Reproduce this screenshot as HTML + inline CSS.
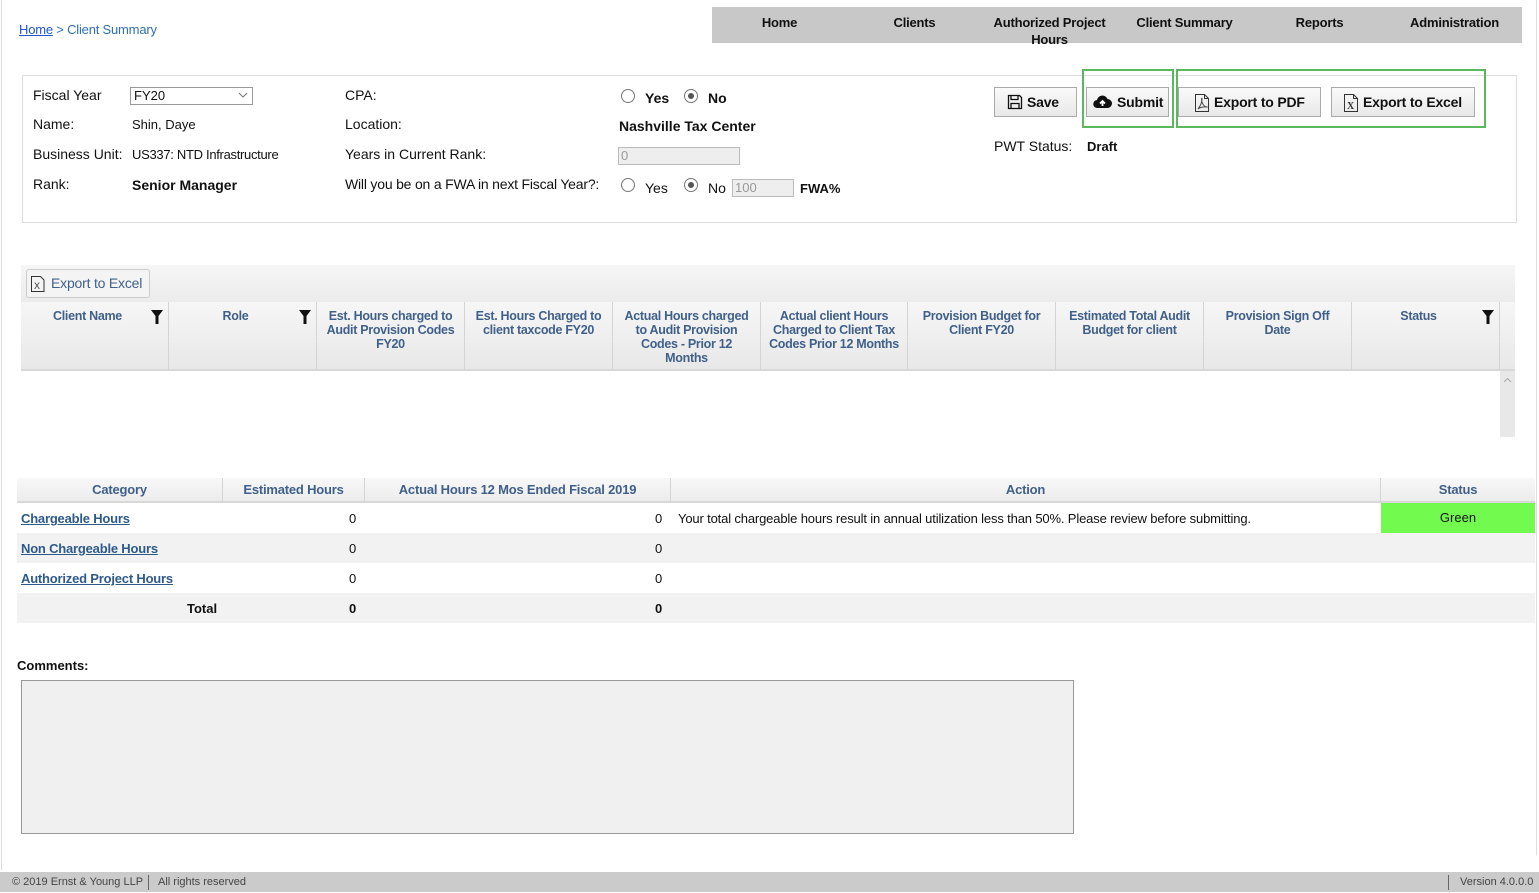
<!DOCTYPE html>
<html><head><meta charset="utf-8">
<style>
*{box-sizing:border-box;margin:0;padding:0}
body{width:1539px;height:892px;position:relative;background:#fff;font-family:"Liberation Sans",Arial,sans-serif;font-size:14px;color:#111;overflow:hidden}
.a{position:absolute;white-space:nowrap}
.b{font-weight:bold}
.nav{position:absolute;left:712px;top:7px;width:810px;height:36px;background:#c8c8c8}
.nav div{position:absolute;top:7px;width:135px;text-align:center;font-weight:bold;font-size:13px;line-height:17px;letter-spacing:-0.2px}
.radio{position:absolute;width:14px;height:14px;border:1px solid #777;border-radius:50%;background:#fff}
.radio.on::after{content:"";position:absolute;left:3px;top:3px;width:6px;height:6px;border-radius:50%;background:#555}
.inp{position:absolute;height:18px;border:1px solid #bbb;background:#eee;color:#999;font-size:13px;padding-left:2px;line-height:16px}
.btn{position:absolute;top:87px;height:30px;border:1px solid #aaa;background:linear-gradient(#fafafa,#e8e8e8);font-weight:bold;font-size:14px;line-height:28px;padding-left:32px;letter-spacing:-0.2px}
.btn svg{position:absolute;left:12px;top:6px}
.gh{position:absolute;top:302px;height:69px;background:linear-gradient(#f6f6f6,#e8e8e8);border-bottom:2px solid #d8d8d8;border-right:1px solid #d4d4d4;color:#40608a;font-weight:bold;font-size:12.5px;text-align:center;line-height:14px;padding:7px 1px 0;letter-spacing:-0.3px}
.gh svg{position:absolute;right:5px;top:8px}
.st{position:absolute;height:25px;top:478px;background:linear-gradient(#f8f8f8,#ececec);border-bottom:2px solid #d8d8d8;border-right:1px solid #d4d4d4;color:#40608a;font-weight:bold;font-size:13px;text-align:center;line-height:24px;letter-spacing:-0.2px}
.row{position:absolute;left:17px;width:1518px;height:30px}
.lk{position:absolute;left:4px;top:8px;color:#2e5a8a;font-weight:bold;font-size:13px;text-decoration:underline;letter-spacing:-0.2px}
.n{position:absolute;top:8px;font-size:13px}
</style></head><body>
<div class="a" style="left:1px;top:0;width:1px;height:870px;background:#ddd"></div>
<div class="a" style="left:1536px;top:0;width:1px;height:855px;background:#ddd"></div>

<div class="a" style="left:19px;top:22px;font-size:13px;color:#2f6fb0;letter-spacing:-0.2px"><span style="text-decoration:underline;color:#2255cc">Home</span> &gt; Client Summary</div>

<div class="nav">
<div style="left:0">Home</div><div style="left:135px">Clients</div><div style="left:270px">Authorized Project<br>Hours</div><div style="left:405px">Client Summary</div><div style="left:540px">Reports</div><div style="left:675px">Administration</div>
</div>

<div class="a" style="left:22px;top:75px;width:1495px;height:148px;border:1px solid #ddd"></div>
<div class="a" style="left:33px;top:87px">Fiscal Year</div>
<div class="a" style="left:130px;top:87px;width:123px;height:18px;border:1px solid #999;font-size:13px;padding-left:3px;line-height:16px">FY20<svg style="position:absolute;right:4px;top:4px" width="10" height="7" viewBox="0 0 10 7"><path d="M1 1l4 4 4-4" stroke="#777" fill="none"/></svg></div>
<div class="a" style="left:33px;top:116px">Name:</div>
<div class="a" style="left:132px;top:117px;font-size:13px">Shin, Daye</div>
<div class="a" style="left:33px;top:146px">Business Unit:</div>
<div class="a" style="left:132px;top:147px;font-size:13px;letter-spacing:-0.3px">US337: NTD Infrastructure</div>
<div class="a" style="left:33px;top:176px">Rank:</div>
<div class="a b" style="left:132px;top:177px">Senior Manager</div>

<div class="a" style="left:345px;top:87px">CPA:</div>
<div class="a" style="left:345px;top:116px">Location:</div>
<div class="a" style="left:345px;top:146px">Years in Current Rank:</div>
<div class="a" style="left:345px;top:176px;letter-spacing:-0.2px">Will you be on a FWA in next Fiscal Year?:</div>

<div class="radio" style="left:621px;top:89px"></div><div class="a b" style="left:645px;top:90px">Yes</div>
<div class="radio on" style="left:684px;top:89px"></div><div class="a b" style="left:708px;top:90px">No</div>
<div class="a b" style="left:619px;top:118px">Nashville Tax Center</div>
<div class="inp" style="left:618px;top:147px;width:122px">0</div>
<div class="radio" style="left:621px;top:178px"></div><div class="a" style="left:645px;top:180px">Yes</div>
<div class="radio on" style="left:684px;top:178px"></div><div class="a" style="left:708px;top:180px">No</div>
<div class="inp" style="left:732px;top:179px;width:62px">100</div>
<div class="a b" style="left:800px;top:181px;font-size:13px">FWA%</div>

<div class="a" style="left:1082px;top:69px;width:92px;height:59px;border:2px solid #5cb85c"></div>
<div class="a" style="left:1176px;top:69px;width:310px;height:59px;border:2px solid #5cb85c"></div>
<div class="btn" style="left:994px;width:83px"><svg width="16" height="16" viewBox="0 0 16 16" fill="none" stroke="#111" stroke-width="1.3"><path d="M1.5 1.5h11l2 2v11h-13z M4 1.5v4h7v-4 M4 14.5v-5h8v5"/></svg>Save</div>
<div class="btn" style="left:1086px;width:83px;padding-left:30px"><svg style="left:6px" width="19" height="16" viewBox="0 0 18 16"><path d="M4 14a4 4 0 0 1-.5-8A5.5 5.5 0 0 1 14 5a4.5 4.5 0 0 1 0 9z" fill="#111"/><path d="M9 12V7M6.5 9.5 9 7l2.5 2.5" stroke="#fff" stroke-width="1.8" fill="none"/></svg>Submit</div>
<div class="btn" style="left:1178px;width:143px;padding-left:35px"><svg style="left:15px" width="16" height="18" viewBox="0 0 16 18" fill="none" stroke="#333" stroke-width="1"><path d="M1.5 .5h9l4 4v13h-13z M10.5 .5v4h4"/><path d="M4 15c3-4 4-8 4-10s-1 0 0 3 3 5 5 5-6-1-9 2" stroke="#444"/></svg>Export to PDF</div>
<div class="btn" style="left:1331px;width:144px;padding-left:31px"><svg style="left:11px" width="16" height="18" viewBox="0 0 16 18" fill="none" stroke="#333" stroke-width="1"><path d="M1.5 .5h9l4 4v13h-13z M10.5 .5v4h4"/><text x="4" y="15" font-size="10" font-family="Liberation Serif" fill="#333" stroke="none">X</text></svg>Export to Excel</div>
<div class="a" style="left:994px;top:138px">PWT Status:</div>
<div class="a b" style="left:1087px;top:139px;font-size:13px">Draft</div>

<div class="a" style="left:21px;top:265px;width:1494px;height:37px;background:linear-gradient(#f6f6f6,#ebebeb)"></div>
<div class="a" style="left:26px;top:269px;width:124px;height:29px;border:1px solid #ccc;border-radius:3px;background:#f4f4f4;color:#40608a;font-size:14px;line-height:27px;padding-left:24px;letter-spacing:-0.2px"><svg style="position:absolute;left:4px;top:6px" width="14" height="16" viewBox="0 0 14 16" fill="none" stroke="#333"><path d="M.5 .5h9l3.5 3.5v11.5H.5z"/><text x="3" y="13" font-size="9" fill="#333" stroke="none">X</text></svg>Export to Excel</div>

<div class="gh" style="left:21px;width:148px;padding-right:15px">Client Name<svg width="12" height="14" viewBox="0 0 12 14"><path d="M0 0h12L7.5 6v8h-3V6z" fill="#111"/></svg></div>
<div class="gh" style="left:169px;width:148px;padding-right:15px">Role<svg width="12" height="14" viewBox="0 0 12 14"><path d="M0 0h12L7.5 6v8h-3V6z" fill="#111"/></svg></div>
<div class="gh" style="left:317px;width:148px">Est. Hours charged to Audit Provision Codes FY20</div>
<div class="gh" style="left:465px;width:148px">Est. Hours Charged to client taxcode FY20</div>
<div class="gh" style="left:613px;width:148px;padding:7px 6px 0">Actual Hours charged to Audit Provision Codes - Prior 12 Months</div>
<div class="gh" style="left:761px;width:147px;padding:7px 6px 0">Actual client Hours Charged to Client Tax Codes Prior 12 Months</div>
<div class="gh" style="left:908px;width:148px">Provision Budget for Client FY20</div>
<div class="gh" style="left:1056px;width:148px">Estimated Total Audit Budget for client</div>
<div class="gh" style="left:1204px;width:148px;padding:7px 12px 0">Provision Sign Off Date</div>
<div class="gh" style="left:1352px;width:148px;padding-right:15px">Status<svg width="12" height="14" viewBox="0 0 12 14"><path d="M0 0h12L7.5 6v8h-3V6z" fill="#111"/></svg></div>
<div class="gh" style="left:1500px;width:15px;border-right:none"></div>
<div class="a" style="left:1500px;top:371px;width:15px;height:66px;background:#e8e8e8"><svg style="position:absolute;left:3px;top:6px" width="9" height="6" viewBox="0 0 9 6"><path d="M1 5l3.5-3.5L8 5" stroke="#aaa" fill="none"/></svg></div>

<div class="st" style="left:17px;width:206px">Category</div>
<div class="st" style="left:223px;width:142px">Estimated Hours</div>
<div class="st" style="left:365px;width:306px">Actual Hours 12 Mos Ended Fiscal 2019</div>
<div class="st" style="left:671px;width:710px">Action</div>
<div class="st" style="left:1381px;width:154px;border-right:none">Status</div>

<div class="row" style="top:503px;background:#fff"><span class="lk">Chargeable Hours</span><span class="n" style="left:332px">0</span><span class="n" style="left:638px">0</span><span class="n" style="left:661px;letter-spacing:-0.15px">Your total chargeable hours result in annual utilization less than 50%. Please review before submitting.</span><div class="a" style="left:1364px;top:0;width:154px;height:30px;background:#72fa4f;text-align:center;line-height:30px;font-size:13px">Green</div></div>
<div class="row" style="top:533px;background:#f2f2f2"><span class="lk">Non Chargeable Hours</span><span class="n" style="left:332px">0</span><span class="n" style="left:638px">0</span></div>
<div class="row" style="top:563px;background:#fff"><span class="lk">Authorized Project Hours</span><span class="n" style="left:332px">0</span><span class="n" style="left:638px">0</span></div>
<div class="row" style="top:593px;background:#f2f2f2"><span class="n b" style="left:170px">Total</span><span class="n b" style="left:332px">0</span><span class="n b" style="left:638px">0</span></div>

<div class="a b" style="left:17px;top:658px;font-size:13px">Comments:</div>
<div class="a" style="left:21px;top:680px;width:1053px;height:154px;background:#f0f0f0;border:1px solid #999"></div>

<div class="a" style="left:0;top:872px;width:1539px;height:20px;background:#cbcbcb;font-size:11px;color:#444;line-height:21px">
<span class="a" style="left:12px">© 2019 Ernst &amp; Young LLP</span>
<span class="a" style="left:148px;top:3px;width:1px;height:15px;background:#666"></span>
<span class="a" style="left:158px">All rights reserved</span>
<span class="a" style="left:1448px;top:3px;width:1px;height:15px;background:#666"></span>
<span class="a" style="left:1460px">Version 4.0.0.0</span>
</div>
</body></html>
